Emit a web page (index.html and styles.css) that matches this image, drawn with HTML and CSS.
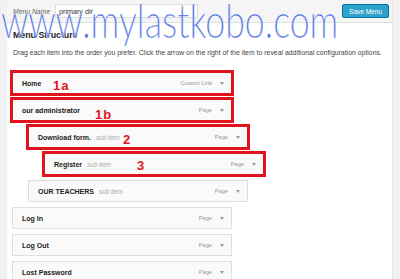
FILE: index.html
```html
<!DOCTYPE html>
<html lang="en">
<head>
    <meta charset="UTF-8">
    <title>Menu Structure</title>
    <link rel="stylesheet" href="styles.css">
</head>
<body>
    <div class="panel">
        <div class="menu-header">
            <label class="menu-name-label" for="menu_name">Menu Name</label>
            <input class="menu-name" id="menu_name" type="text" value="primary dir">
            <button class="save-button">Save Menu</button>
        </div>

        <div class="menu-body">
            <h3>Menu Structure</h3>
            <p class="hint">Drag each item into the order you prefer. Click the arrow on the right of the item to reveal additional configuration options.</p>

            <ul class="menu-items">
                <li class="menu-item depth-0 marked">
                    <span class="item-title">Home</span>
                    <span class="item-type">Custom Link</span><span class="arrow"></span>
                    <span class="note note-1a">1a</span>
                </li>
                <li class="menu-item depth-0 marked">
                    <span class="item-title">our administrator</span>
                    <span class="item-type">Page</span><span class="arrow"></span>
                    <span class="note note-1b">1b</span>
                </li>
                <li class="menu-item depth-1 marked">
                    <span class="item-title">Download form.</span><span class="sub">sub item</span>
                    <span class="item-type">Page</span><span class="arrow"></span>
                    <span class="note note-2">2</span>
                </li>
                <li class="menu-item depth-2 marked">
                    <span class="item-title">Register</span><span class="sub">sub item</span>
                    <span class="item-type">Page</span><span class="arrow"></span>
                    <span class="note note-3">3</span>
                </li>
                <li class="menu-item depth-1">
                    <span class="item-title">OUR TEACHERS</span><span class="sub">sub item</span>
                    <span class="item-type">Page</span><span class="arrow"></span>
                </li>
                <li class="menu-item depth-0">
                    <span class="item-title">Log In</span>
                    <span class="item-type">Page</span><span class="arrow"></span>
                </li>
                <li class="menu-item depth-0">
                    <span class="item-title">Log Out</span>
                    <span class="item-type">Page</span><span class="arrow"></span>
                </li>
                <li class="menu-item depth-0">
                    <span class="item-title">Lost Password</span>
                    <span class="item-type">Page</span><span class="arrow"></span>
                </li>
            </ul>
        </div>
    </div>

    <div class="watermark">www.mylastkobo.com</div>
</body>
</html>
```

FILE: styles.css
```css
body {
    margin: 0;
    font-family: "Liberation Sans", Arial, sans-serif;
    background-color: #f1f1f1;
    height: 279px;
    overflow: hidden;
    position: relative;
}

.panel {
    margin-left: 7px;
    width: 386px;
    height: 279px;
    background: #ffffff;
    border-right: 1px solid #e5e5e5;
    box-sizing: border-box;
}

.menu-header {
    display: flex;
    align-items: center;
    height: 22px;
    padding: 0 3px 0 6px;
    background: #f5f5f5;
    border-bottom: 1px solid #dfdfdf;
}

.menu-name-label {
    font-size: 6.8px;
    font-style: italic;
    color: #666;
    width: 42px;
}

.menu-name {
    width: 143px;
    height: 14px;
    box-sizing: border-box;
    margin: 0;
    padding: 0 3px;
    border: 1px solid #dddddd;
    background: #ffffff;
    font-family: "Liberation Sans", Arial, sans-serif;
    font-size: 7.2px;
    color: #333;
    outline: none;
}

.save-button {
    margin-left: auto;
    width: 47px;
    height: 14px;
    padding: 0;
    border: 1px solid #0074a2;
    border-radius: 2px;
    background: #2ea2cc;
    color: #ffffff;
    font-family: "Liberation Sans", Arial, sans-serif;
    font-size: 6.5px;
}

.menu-body {
    padding: 7px 0 0 5px;
}

h3 {
    margin: 0 0 0 1px;
    font-size: 8.8px;
    line-height: 11px;
    color: #222;
}

.hint {
    margin: 7px 0 0 1px;
    font-size: 6.9px;
    line-height: 9px;
    color: #444;
    white-space: nowrap;
}

.menu-items {
    list-style: none;
    margin: 15px 0 0 0;
    padding: 0;
}

.menu-item {
    position: relative;
    display: flex;
    align-items: center;
    width: 220px;
    height: 22px;
    box-sizing: border-box;
    margin-bottom: 5px;
    padding: 0 7px 0 9px;
    background: #fafafa;
    border: 1px solid #dfdfdf;
}

.depth-1 { margin-left: 16px; }
.depth-2 { margin-left: 32px; }

.marked {
    outline: 3px solid #e1141e;
    outline-offset: -1px;
}

.item-title {
    font-size: 7px;
    font-weight: bold;
    color: #222;
}

.sub {
    margin-left: 5px;
    font-size: 6.3px;
    font-style: italic;
    color: #aaa;
}

.item-type {
    margin-left: auto;
    font-size: 5.7px;
    color: #999;
}

.arrow {
    margin-left: 8px;
    width: 0;
    height: 0;
    border-left: 2px solid transparent;
    border-right: 2px solid transparent;
    border-top: 3px solid #999;
}

.note {
    position: absolute;
    font-size: 13px;
    font-weight: bold;
    line-height: 13px;
    letter-spacing: 1px;
    color: #e1141e;
}

.note-1a { left: 40px; top: 6px; }
.note-1b { left: 82px; top: 8px; }
.note-2 { left: 94px; top: 6px; }
.note-3 { left: 92px; top: 5px; }

/* watermark drawn over the screenshot, thinned with a light edge */
.watermark {
    position: absolute;
    left: 1px;
    top: -3px;
    font-family: Lato, sans-serif;
    font-weight: 300;
    font-size: 47px;
    line-height: 47px;
    color: #4a6ce0;
    -webkit-text-stroke: 0.7px rgba(255, 255, 255, 0.7);
    white-space: nowrap;
    transform: scaleX(0.76);
    transform-origin: left top;
    pointer-events: none;
}
```
